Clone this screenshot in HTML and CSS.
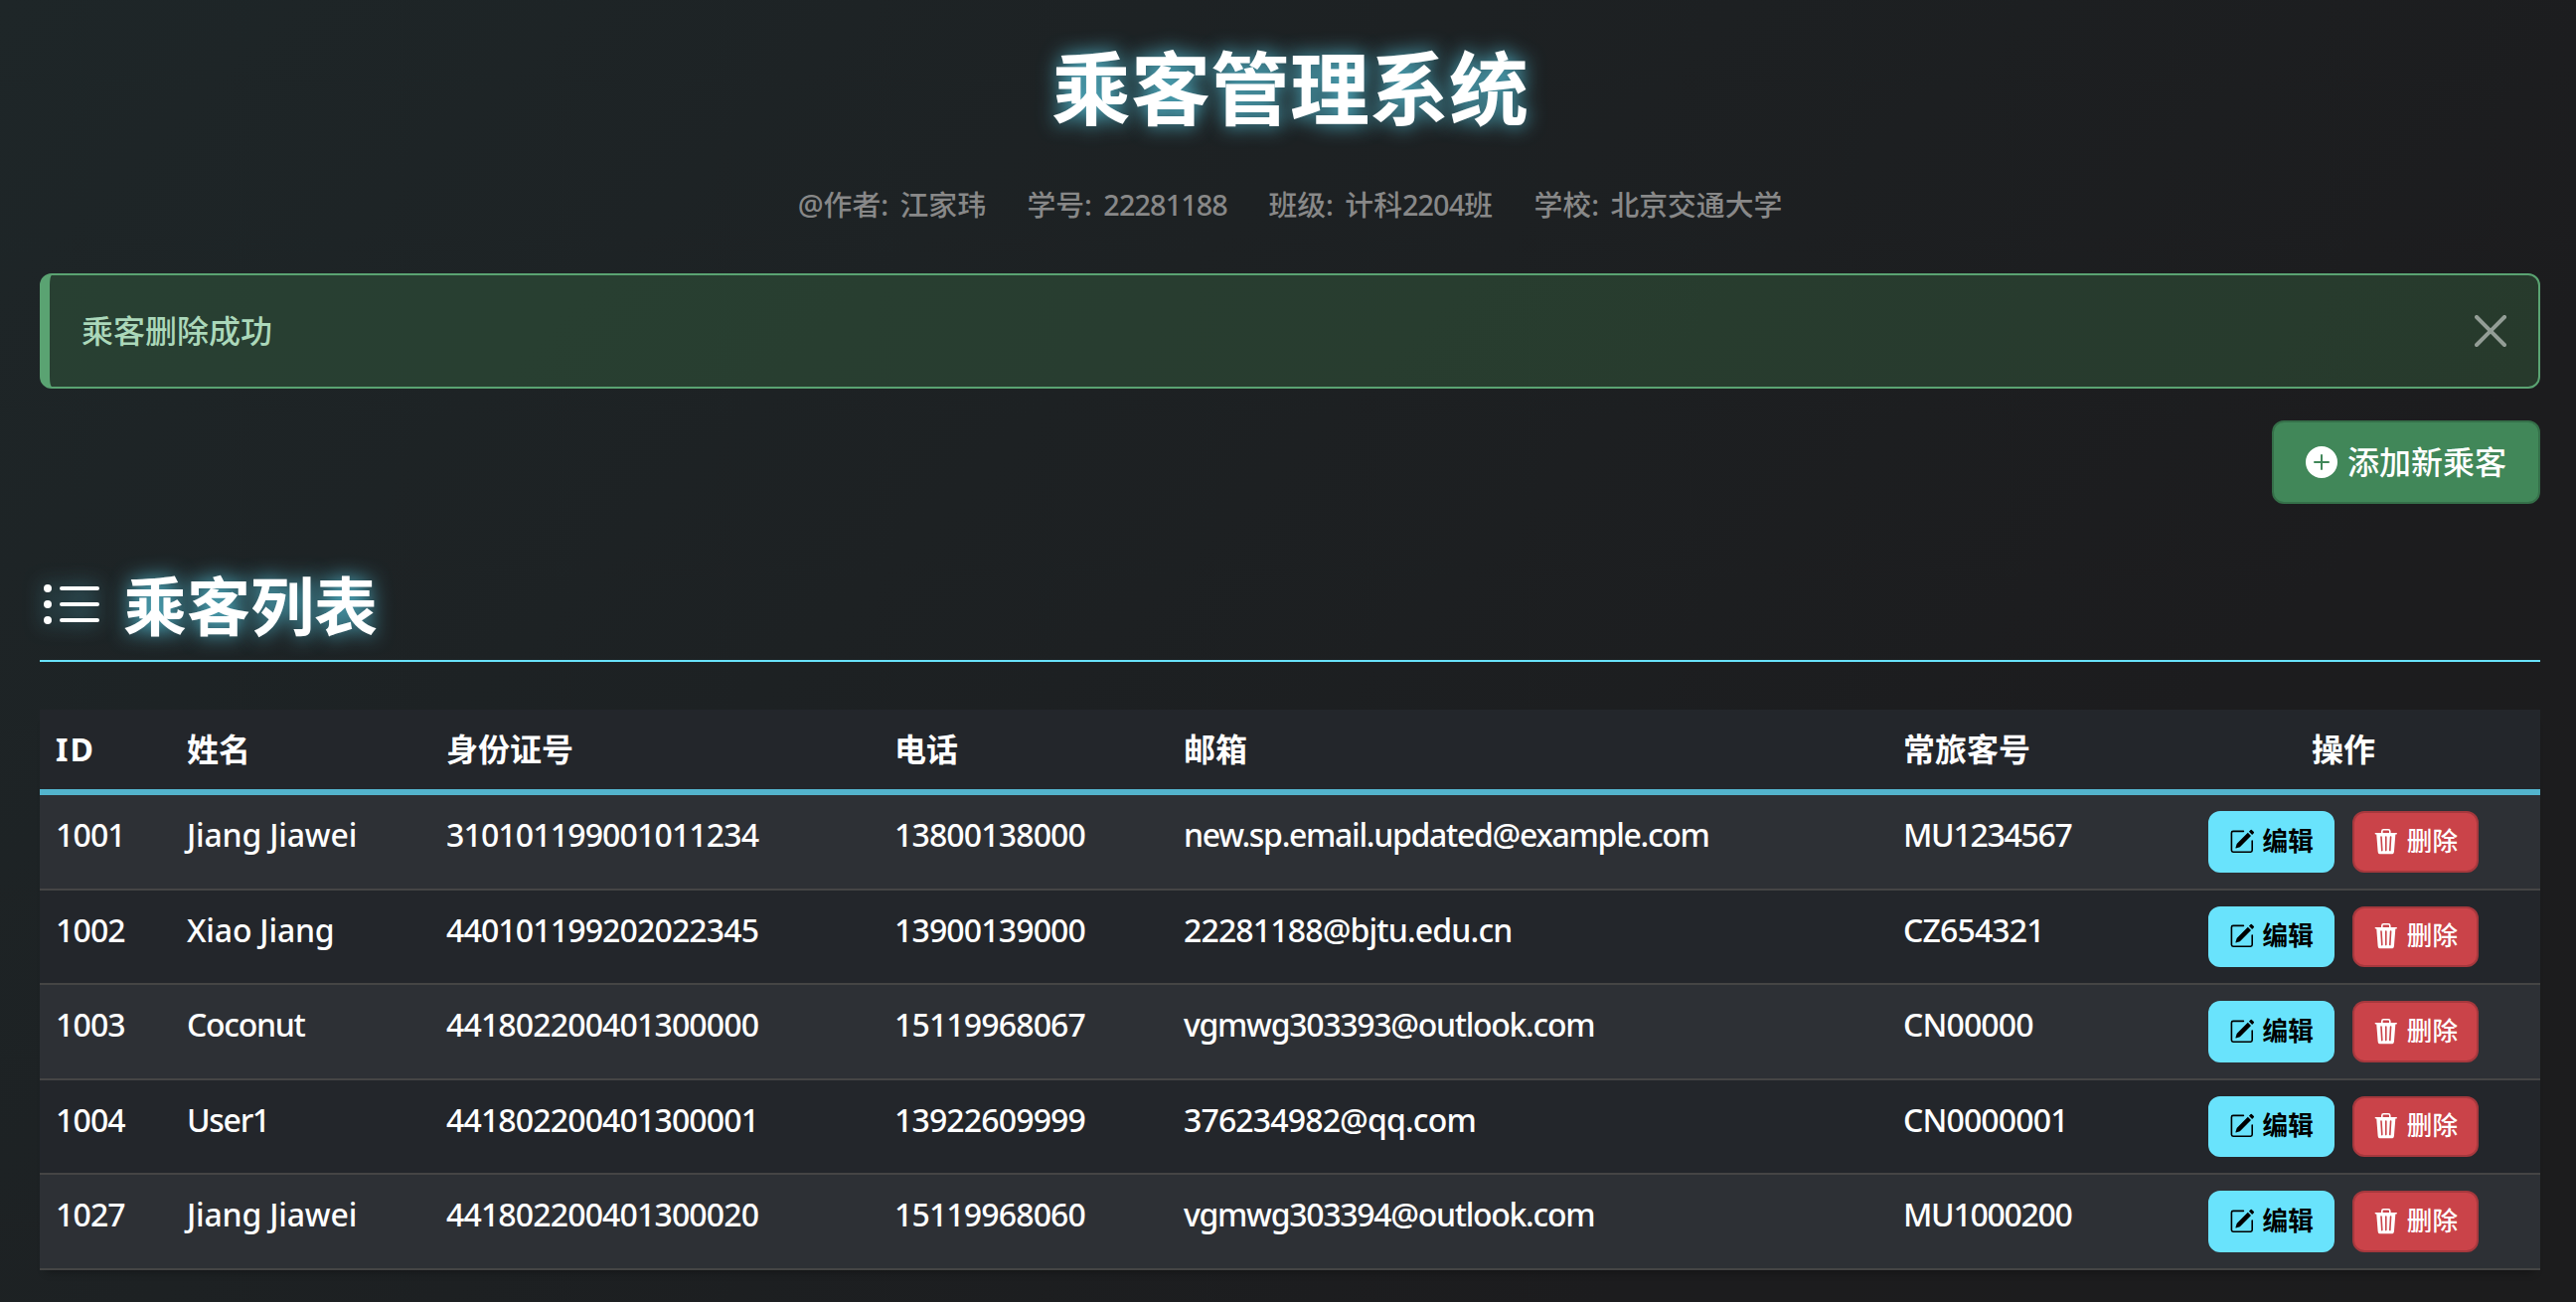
FILE: index.html
```html
<!DOCTYPE html>
<html lang="zh-CN">
<head>
<meta charset="utf-8">
<title>乘客管理系统</title>
<link rel="stylesheet" href="styles.css">
</head>
<body>
<svg class="sprite" aria-hidden="true">
  <symbol id="pencil-square" viewBox="0 0 16 16"><path d="M15.502 1.94a.5.5 0 0 1 0 .706L14.459 3.69l-2-2L13.502.646a.5.5 0 0 1 .707 0l1.293 1.293zm-1.75 2.456-2-2L4.939 9.21a.5.5 0 0 0-.121.196l-.805 2.414a.25.25 0 0 0 .316.316l2.414-.805a.5.5 0 0 0 .196-.12l6.813-6.814z"/><path fill-rule="evenodd" d="M1 13.5A1.5 1.5 0 0 0 2.5 15h11a1.5 1.5 0 0 0 1.5-1.5v-6a.5.5 0 0 0-1 0v6a.5.5 0 0 1-.5.5h-11a.5.5 0 0 1-.5-.5v-11a.5.5 0 0 1 .5-.5H9a.5.5 0 0 0 0-1H2.5A1.5 1.5 0 0 0 1 2.5z"/></symbol>
  <symbol id="trash" viewBox="0 0 16 16"><path d="M11 1.5v1h3.5a.5.5 0 0 1 0 1h-.538l-.853 10.66A2 2 0 0 1 11.115 16h-6.23a2 2 0 0 1-1.994-1.84L2.038 3.5H1.5a.5.5 0 0 1 0-1H5v-1A1.5 1.5 0 0 1 6.5 0h3A1.5 1.5 0 0 1 11 1.5m-5 0v1h4v-1a.5.5 0 0 0-.5-.5h-3a.5.5 0 0 0-.5.5M4.5 5.029l.5 8.5a.5.5 0 1 0 .998-.06l-.5-8.5a.5.5 0 1 0-.998.06m6.53-.528a.5.5 0 0 0-.528.47l-.5 8.5a.5.5 0 0 0 .998.058l.5-8.5a.5.5 0 0 0-.47-.528M8 4.5a.5.5 0 0 0-.5.5v8.5a.5.5 0 0 0 1 0V5a.5.5 0 0 0-.5-.5"/></symbol>
</svg>
<main class="page">
  <h1 class="title">乘客管理系统</h1>
  <div class="meta"><span>@作者: 江家玮</span><span>学号: <span class="num">22281188</span></span><span>班级: 计科<span class="num">2204</span>班</span><span>学校: 北京交通大学</span></div>
  <div class="alert"><span>乘客删除成功</span>
    <svg class="close" viewBox="0 0 16 16"><path d="M.293.293a1 1 0 0 1 1.414 0L8 6.586 14.293.293a1 1 0 1 1 1.414 1.414L9.414 8l6.293 6.293a1 1 0 0 1-1.414 1.414L8 9.414l-6.293 6.293a1 1 0 0 1-1.414-1.414L6.586 8 .293 1.707a1 1 0 0 1 0-1.414z"/></svg>
  </div>
  <div class="toolbar"><button class="add">
    <svg class="add-icon" viewBox="0 0 16 16"><path d="M16 8A8 8 0 1 1 0 8a8 8 0 0 1 16 0M8.5 4.5a.5.5 0 0 0-1 0v3h-3a.5.5 0 0 0 0 1h3v3a.5.5 0 0 0 1 0v-3h3a.5.5 0 0 0 0-1h-3z"/></svg>添加新乘客</button></div>
  <h2 class="section"><svg class="list-icon" viewBox="0 0 16 16"><path fill-rule="evenodd" d="M5 11.5a.5.5 0 0 1 .5-.5h9a.5.5 0 0 1 0 1h-9a.5.5 0 0 1-.5-.5m0-4a.5.5 0 0 1 .5-.5h9a.5.5 0 0 1 0 1h-9a.5.5 0 0 1-.5-.5m0-4a.5.5 0 0 1 .5-.5h9a.5.5 0 0 1 0 1h-9a.5.5 0 0 1-.5-.5m-3 1a1 1 0 1 0 0-2 1 1 0 0 0 0 2m0 4a1 1 0 1 0 0-2 1 1 0 0 0 0 2m0 4a1 1 0 1 0 0-2 1 1 0 0 0 0 2"/></svg>乘客列表</h2>
  <table class="list">
    <colgroup><col class="c-id"><col class="c-name"><col class="c-card"><col class="c-tel"><col class="c-mail"><col class="c-ffn"><col class="c-act"></colgroup>
    <thead><tr><th class="id">ID</th><th>姓名</th><th>身份证号</th><th>电话</th><th>邮箱</th><th>常旅客号</th><th class="act">操作</th></tr></thead>
    <tbody>
      <tr><td>1001</td><td class="loose">Jiang Jiawei</td><td>310101199001011234</td><td>13800138000</td><td class="tight">new.sp.email.updated@example.com</td><td class="tight">MU1234567</td><td><div class="actions"><button class="btn edit"><svg><use href="#pencil-square"/></svg>编辑</button><button class="btn del"><svg><use href="#trash"/></svg>删除</button></div></td></tr>
      <tr><td>1002</td><td class="loose">Xiao Jiang</td><td>440101199202022345</td><td>13900139000</td><td>22281188@bjtu.edu.cn</td><td>CZ654321</td><td><div class="actions"><button class="btn edit"><svg><use href="#pencil-square"/></svg>编辑</button><button class="btn del"><svg><use href="#trash"/></svg>删除</button></div></td></tr>
      <tr><td>1003</td><td class="tight">Coconut</td><td>441802200401300000</td><td>15119968067</td><td class="tight">vgmwg303393@outlook.com</td><td>CN00000</td><td><div class="actions"><button class="btn edit"><svg><use href="#pencil-square"/></svg>编辑</button><button class="btn del"><svg><use href="#trash"/></svg>删除</button></div></td></tr>
      <tr><td>1004</td><td class="tight">User1</td><td>441802200401300001</td><td>13922609999</td><td>376234982@qq.com</td><td>CN0000001</td><td><div class="actions"><button class="btn edit"><svg><use href="#pencil-square"/></svg>编辑</button><button class="btn del"><svg><use href="#trash"/></svg>删除</button></div></td></tr>
      <tr><td>1027</td><td class="loose">Jiang Jiawei</td><td>441802200401300020</td><td>15119968060</td><td class="tight">vgmwg303394@outlook.com</td><td class="tight">MU1000200</td><td><div class="actions"><button class="btn edit"><svg><use href="#pencil-square"/></svg>编辑</button><button class="btn del"><svg><use href="#trash"/></svg>删除</button></div></td></tr>
    </tbody>
  </table>
</main>
</body>
</html>
```
FILE: styles.css
```css
* { box-sizing: border-box; }
body {
  margin: 0;
  height: 1310px;
  overflow: hidden;
  background: linear-gradient(135deg, #1e2628 0%, #1c1c1e 75%, #1c1c1d 100%);
  color: #fff;
  font: 500 32px/48px "Noto Sans", "Noto Sans CJK SC", sans-serif;
}
svg { fill: currentColor; flex: none; display: block; }
.sprite { display: none; }
button { font: inherit; color: inherit; display: flex; align-items: center; white-space: nowrap; }
.page { padding: 40px 36px 0 40px; }
.title {
  margin: 0;
  font-size: 80px;
  line-height: 96px;
  font-weight: 700;
  text-align: center;
  text-shadow: 0 0 20px rgba(90, 205, 230, .9);
}
.meta {
  display: flex;
  justify-content: center;
  gap: 41.5px;
  margin-top: 48px;
  font-size: 28.8px;
  line-height: 43px;
  color: #888;
  word-spacing: 4px;
}
.num { letter-spacing: -.9px; }
.alert {
  display: flex;
  align-items: center;
  justify-content: space-between;
  height: 116px;
  margin-top: 48px;
  padding: 0 32px;
  border: 2px solid #5aa372;
  border-left-width: 10px;
  border-radius: 12px;
  background: rgba(64, 125, 78, .31);
  color: #abd8ba;
}
.close { width: 32px; height: 32px; color: #fff; opacity: .5; }
.toolbar { display: flex; justify-content: flex-end; margin-top: 32px; }
.add {
  gap: 10px;
  height: 84px;
  padding: 0 32px;
  background: #418759;
  border: 2px solid #356f49;
  border-radius: 12px;
}
.add-icon { width: 32px; height: 32px; }
.section {
  display: flex;
  align-items: center;
  gap: 20px;
  margin: 64px 0 48px;
  height: 95px;
  padding-bottom: 16px;
  border-bottom: 2px solid #68e2fa;
  font-size: 64px;
  line-height: 77px;
  text-shadow: 0 0 20px rgba(90, 205, 230, .9);
}
.list-icon {
  width: 64px;
  height: 64px;
  filter: drop-shadow(0 0 10px rgba(90, 205, 230, .7));
}
.list {
  width: 100%;
  table-layout: fixed;
  border-collapse: separate;
  border-spacing: 0;
  box-shadow: 0 8px 8px -6px rgba(0, 0, 0, .3);
}
.c-id { width: 132px; }
.c-name { width: 261px; }
.c-card { width: 451px; }
.c-tel { width: 291px; }
.c-mail { width: 724px; }
.c-ffn { width: 261px; }
.c-act { width: 396px; }
.list th, .list td { padding: 16px; text-align: left; vertical-align: top; letter-spacing: -.85px; white-space: nowrap; }
.list th { height: 86px; background: #23262b; border-bottom: 6px solid #53b4cd; letter-spacing: 0; }
.list th.act { text-align: center; }
.list th.id { letter-spacing: 2px; }
.list td { height: 95.5px; padding-bottom: 0; border-bottom: 2px solid #454545; background: #23262b; }
.list td.tight { letter-spacing: -1.3px; }
.list td.loose { letter-spacing: -.2px; }
.list tbody tr:nth-child(odd) td { background: #2d3035; }
.actions { display: flex; justify-content: center; gap: 18px; }
.btn {
  gap: 8px;
  height: 61.5px;
  padding: 0 19.2px;
  border: 2px solid;
  border-radius: 12px;
  font-size: 25.6px;
  line-height: 38px;
  letter-spacing: 0;
}
.btn svg { width: 25.6px; height: 25.6px; }
.edit { background: #69e3fc; border-color: #69e3fc; color: #000; font-weight: 700; }
.del { background: #ca4349; border-color: #a6383d; color: #fff; }
```
